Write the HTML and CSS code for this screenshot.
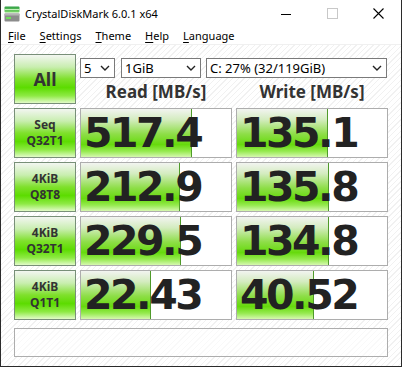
FILE: index.html
```html
<!DOCTYPE html>
<html lang="en">
<head>
<meta charset="UTF-8">
<link rel="stylesheet" href="styles.css">
<title>CrystalDiskMark 6.0.1 x64</title>
</head>
<body>
<div class="window">
  <div class="titlebar">
    <svg class="app-icon" width="16" height="16" viewBox="0 0 16 16">
      <defs>
        <linearGradient id="g1" x1="0" y1="0" x2="0" y2="1">
          <stop offset="0" stop-color="#2f9e44"/>
          <stop offset="1" stop-color="#7fd96a"/>
        </linearGradient>
      </defs>
      <rect x="0.5" y="0.5" width="15" height="6" rx="1" fill="url(#g1)"/>
      <rect x="0.5" y="3" width="15" height="1" fill="#c8f0c0"/>
      <rect x="0.5" y="7.5" width="15" height="8" rx="1" fill="#8c8c8c"/>
      <rect x="0.5" y="7.5" width="15" height="2" fill="#b4b4b4"/>
      <rect x="2" y="11" width="5" height="2" fill="#6ee05a"/>
    </svg>
    <span class="title">CrystalDiskMark 6.0.1 x64</span>
    <div class="controls">
      <div class="ctl"><svg width="10" height="10"><line x1="0" y1="5.5" x2="10" y2="5.5" stroke="#000"/></svg></div>
      <div class="ctl"><svg width="11" height="11"><rect x="0.5" y="0.5" width="10" height="10" fill="none" stroke="#c8c8c8"/></svg></div>
      <div class="ctl"><svg width="11" height="11"><path d="M0.5 0.5 L10.5 10.5 M10.5 0.5 L0.5 10.5" stroke="#000" stroke-width="1.1"/></svg></div>
    </div>
  </div>
  <div class="menubar">
    <span><u>F</u>ile</span>
    <span><u>S</u>ettings</span>
    <span><u>T</u>heme</span>
    <span><u>H</u>elp</span>
    <span><u>L</u>anguage</span>
  </div>
  <div class="main">
    <div class="grid">
      <div class="btn all">All</div>
      <div class="head">
        <div class="selects">
          <div class="sel sel-count">5<svg width="10" height="7"><path d="M1 1 L5 5 L9 1" fill="none" stroke="#222" stroke-width="1.4"/></svg></div>
          <div class="sel sel-size">1GiB<svg width="10" height="7"><path d="M1 1 L5 5 L9 1" fill="none" stroke="#222" stroke-width="1.4"/></svg></div>
          <div class="sel sel-drive">C: 27% (32/119GiB)<svg width="10" height="7"><path d="M1 1 L5 5 L9 1" fill="none" stroke="#222" stroke-width="1.4"/></svg></div>
        </div>
        <div class="labels">
          <div>Read [MB/s]</div>
          <div>Write [MB/s]</div>
        </div>
      </div>

      <div class="btn">Seq<br>Q32T1</div>
      <div class="cell"><div class="bar" style="width:111px"></div><span class="value">517.4</span></div>
      <div class="cell"><div class="bar" style="width:91px"></div><span class="value">135.1</span></div>

      <div class="btn">4KiB<br>Q8T8</div>
      <div class="cell"><div class="bar" style="width:99px"></div><span class="value">212.9</span></div>
      <div class="cell"><div class="bar" style="width:92px"></div><span class="value">135.8</span></div>

      <div class="btn">4KiB<br>Q32T1</div>
      <div class="cell"><div class="bar" style="width:100px"></div><span class="value">229.5</span></div>
      <div class="cell"><div class="bar" style="width:92px"></div><span class="value">134.8</span></div>

      <div class="btn">4KiB<br>Q1T1</div>
      <div class="cell"><div class="bar" style="width:70px"></div><span class="value">22.43</span></div>
      <div class="cell"><div class="bar" style="width:77px"></div><span class="value">40.52</span></div>
    </div>
    <div class="status"></div>
  </div>
</div>
</body>
</html>
```

FILE: styles.css
```css
body {
  margin: 0;
  font-family: "Noto Sans", sans-serif;
}
.window {
  width: 402px;
  height: 367px;
  box-sizing: border-box;
  border: 1px solid #2b2b2b;
  border-top: none;
  background: #fff;
  display: flex;
  flex-direction: column;
}
.titlebar {
  height: 27px;
  display: flex;
  align-items: center;
}
.app-icon {
  margin-left: 3px;
  margin-top: 1px;
}
.title {
  margin-left: 5px;
  font-size: 11px;
  flex: 1;
  color: #000;
}
.controls {
  display: flex;
  align-self: stretch;
}
.ctl {
  width: 46px;
  display: flex;
  align-items: center;
  justify-content: center;
}
.menubar {
  height: 17px;
  display: flex;
  align-items: center;
  font-size: 11px;
  border-bottom: 1px solid #f0f0f0;
}
.menubar span {
  padding: 0 7px;
}
.menubar u {
  text-underline-offset: 2px;
}
.main {
  flex: 1;
  background: repeating-linear-gradient(135deg, #fff 0 3px, #f1f1f1 3px 4px);
  padding: 9px 13px 0;
}
.grid {
  display: grid;
  grid-template-columns: 62px 152px 152px;
  grid-auto-rows: 50px;
  gap: 4px;
}
.head {
  grid-column: 2 / 4;
  display: flex;
  flex-direction: column;
}
.selects {
  display: flex;
  margin-top: 4px;
}
.sel {
  height: 20px;
  box-sizing: border-box;
  border: 1px solid #7a7a7a;
  background: #fff;
  display: flex;
  align-items: center;
  padding-left: 3px;
  font-size: 13px;
  color: #000;
}
.sel svg {
  margin-left: auto;
  margin-right: 4px;
}
.sel-count {
  width: 35px;
}
.sel-size {
  width: 80px;
  margin-left: 6px;
}
.sel-drive {
  width: 181px;
  margin-left: 5px;
}
.labels {
  flex: 1;
  display: grid;
  grid-template-columns: 152px 152px;
  gap: 4px;
  align-items: center;
  text-align: center;
  font-weight: bold;
  font-size: 17px;
  color: #333;
}
.btn {
  box-sizing: border-box;
  border: 1px solid #788f78;
  background: linear-gradient(to bottom, #f3f6f1 0%, #c9eeb0 25%, #7fe02c 50%, #5cdc00 68%, #8eea44 85%, #e2fbc8 100%);
  display: flex;
  align-items: center;
  justify-content: center;
  text-align: center;
  font-weight: bold;
  font-size: 12px;
  line-height: 16px;
  color: #333;
}
.all {
  font-size: 18px;
}
.cell {
  position: relative;
  box-sizing: border-box;
  border: 1px solid #adadad;
  background: #fff;
  overflow: hidden;
  display: flex;
  align-items: center;
}
.bar {
  position: absolute;
  left: 0;
  top: 0;
  bottom: 0;
  box-sizing: border-box;
  border-right: 1px solid #4f9a2a;
  background: linear-gradient(to bottom, #f2f4f0 0%, #d4ecc0 22%, #8ede48 52%, #66da0c 74%, #96ea50 88%, #d6f8b0 100%);
}
.value {
  position: relative;
  padding-left: 3px;
  font-family: "DejaVu Sans", sans-serif;
  font-weight: bold;
  font-size: 41px;
  letter-spacing: -2.5px;
  line-height: 48px;
  color: #222;
}
.status {
  margin-top: 8px;
  height: 29px;
  width: 374px;
  box-sizing: border-box;
  border: 1px solid #adadad;
  background: rgba(255, 255, 255, 0.6);
}
```
